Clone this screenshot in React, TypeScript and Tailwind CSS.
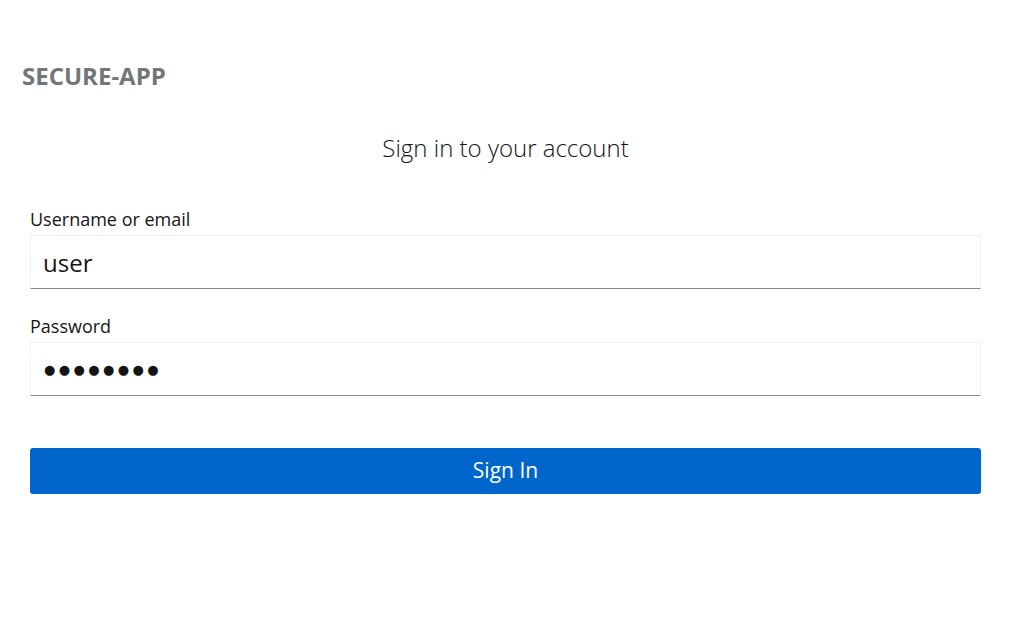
import { useState } from "react";

export default function App() {
  const [username, setUsername] = useState("user");
  const [password, setPassword] = useState("●●●●●●●●");

  return (
    <div className="min-h-screen bg-white font-['Open_Sans',sans-serif] text-[#151515]">
      <header className="px-[22px] pt-[60px]">
        <div className="text-[24px] font-bold leading-[32px] text-[#737679]">SECURE-APP</div>
      </header>

      <main className="px-[30px]">
        <h1 className="mt-[38px] text-center text-[24px] font-light leading-[36px] text-[#151515]">
          Sign in to your account
        </h1>

        <form className="mt-[40px] flex flex-col" onSubmit={(e) => e.preventDefault()}>
          <label htmlFor="username" className="text-[18px] leading-[27px] text-[#151515]">
            Username or email
          </label>
          <input
            id="username"
            value={username}
            onChange={(e) => setUsername(e.target.value)}
            className="mt-[2px] h-[54px] w-full border border-[#f0f0f0] border-b-[#8a8d90] px-[12px] text-[24px] text-[#151515] outline-none"
          />

          <label htmlFor="password" className="mt-[24px] text-[18px] leading-[27px] text-[#151515]">
            Password
          </label>
          {/* masked value drawn with large discs, as the reference browser does */}
          <input
            id="password"
            value={password}
            onChange={(e) => setPassword(e.target.value)}
            className="mt-[2px] h-[54px] w-full border border-[#f0f0f0] border-b-[#8a8d90] pl-[13px] pr-[12px] font-['DejaVu_Sans',sans-serif] text-[13px] tracking-[3.4px] text-[#151515] outline-none"
          />

          <button
            type="submit"
            className="mt-[52px] h-[46px] w-full rounded-[3px] bg-[#0066cc] text-[21px] text-white"
          >
            Sign In
          </button>
        </form>
      </main>
    </div>
  );
}
